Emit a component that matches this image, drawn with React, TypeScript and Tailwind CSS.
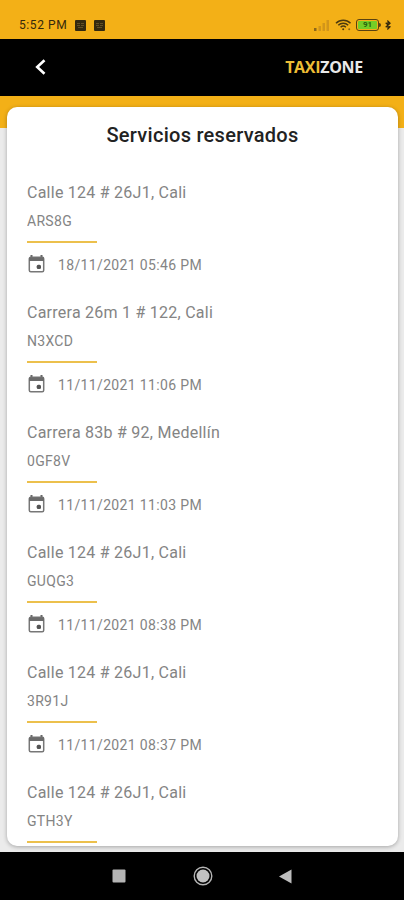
type Service = {
  address: string;
  code: string;
  date?: string;
};

const services: Service[] = [
  { address: "Calle 124 # 26J1, Cali", code: "ARS8G", date: "18/11/2021 05:46 PM" },
  { address: "Carrera 26m 1 # 122, Cali", code: "N3XCD", date: "11/11/2021 11:06 PM" },
  { address: "Carrera 83b # 92, Medellín", code: "0GF8V", date: "11/11/2021 11:03 PM" },
  { address: "Calle 124 # 26J1, Cali", code: "GUQG3", date: "11/11/2021 08:38 PM" },
  { address: "Calle 124 # 26J1, Cali", code: "3R91J", date: "11/11/2021 08:37 PM" },
  { address: "Calle 124 # 26J1, Cali", code: "GTH3Y" },
];

function NotificationIcon() {
  return (
    <svg width="11" height="11" viewBox="0 0 11 11">
      <rect width="11" height="11" rx="1" fill="#33290f" />
      <path d="M2 3.5h3M6 3.5h3M2 5.5h3M6 5.5h3M3 7.5h5" stroke="#6e5a2c" strokeWidth="0.8" />
    </svg>
  );
}

function CalendarIcon() {
  return (
    <svg width="17" height="18" viewBox="0 0 17 18">
      <path d="M3.5 0v3M13.5 0v3" stroke="#666" strokeWidth="2" />
      <rect x="1.3" y="2.3" width="14.4" height="14.4" rx="1.5" fill="none" stroke="#777" strokeWidth="1.5" />
      <path d="M1 2.5h15v3.500H1z" fill="#6b6b6b" />
      <rect x="8.7" y="9.7" width="4.3" height="4.3" rx="1.5" fill="#555" />
    </svg>
  );
}

function StatusBar() {
  return (
    <div className="flex h-[39px] shrink-0 items-center bg-[#f3b017] pt-[11px] pr-[13px] pl-[19px] text-[#35290c]">
      <span className="w-[56px] text-[12px] tracking-[0.6px] whitespace-nowrap">5:52 PM</span>
      <div className="flex gap-2">
        <NotificationIcon />
        <NotificationIcon />
      </div>
      <div className="ml-auto flex items-center">
        <svg width="16" height="11" viewBox="0 0 16 11" fill="#d2951a">
          <rect y="8" width="2.5" height="3" fill="#8d6719" />
          <rect x="4.5" y="6" width="2.5" height="5" />
          <rect x="8.5" y="3" width="2.5" height="8" />
          <rect x="12.5" width="2.5" height="11" />
        </svg>
        <svg className="ml-[5px]" width="17" height="12" viewBox="0 0 17 12" fill="none" stroke="#4b390f" strokeWidth="1.5">
          <path d="M1 4.2C5 .2 11.5 .2 15.5 4.2" />
          <path d="M3.3 6.3C6 3.6 10.5 3.6 13.2 6.3" />
          <path d="M5.6 8.3C7.2 6.8 9.3 6.8 10.9 8.3" />
          <circle cx="8.2" cy="10.3" r="1" fill="#4b390f" stroke="none" />
          <circle cx="14.2" cy="10.2" r="1" fill="#8d6719" stroke="none" />
        </svg>
        <div className="ml-[4px] flex h-[12px] w-[23px] items-center rounded-[3px] border border-[#5a4210] p-px">
          <div className="flex h-full w-full items-center justify-center rounded-[1px] bg-[#75cd27] text-[8px] leading-none font-bold text-[#27630d]">
            91
          </div>
        </div>
        <div className="h-1 w-[2px] rounded-r bg-[#5a4210]" />
        <svg className="ml-[4px]" width="6" height="10" viewBox="0 0 6 10" fill="none" stroke="#35290c" strokeWidth="1.3">
          <path d="M.7 2.8 5 6.700 3 8.800V1.200L5 3.200.7 7.200" />
        </svg>
      </div>
    </div>
  );
}

function Header() {
  return (
    <header className="flex h-[57px] shrink-0 items-center justify-between bg-black pr-[41px] pb-px pl-[34px]">
      <svg width="12" height="16" viewBox="0 0 12 16" fill="none" stroke="#fff" strokeWidth="2.6">
        <path d="M10.5 1.2 3.2 8l7.3 6.8" />
      </svg>
      <div className="font-['Open_Sans',sans-serif] text-[16px] font-bold tracking-[-0.3px] text-[#e9e9e9]">
        <span className="text-[#edbd35]">TAXI</span>ZONE
      </div>
    </header>
  );
}

function ServiceItem({ service }: { service: Service }) {
  return (
    <li className="h-[120.1px] shrink-0 text-[#848484]">
      <p className="text-[16px] leading-5 tracking-[0.25px]">{service.address}</p>
      <p className="mt-[9.5px] text-[14px] leading-[18px] tracking-[0.3px]">{service.code}</p>
      <div className="mt-[10.5px] h-[2px] w-[70px] bg-[#ecc04c]" />
      {service.date && (
        <div className="mt-[11px] flex h-5 items-center pl-px">
          <CalendarIcon />
          <span className="ml-[13px] pt-[3px] text-[14px] tracking-[0.35px]">{service.date}</span>
        </div>
      )}
    </li>
  );
}

function NavBar() {
  return (
    <nav className="flex h-12 shrink-0 items-center bg-black pl-[112px]">
      <svg width="14" height="14" viewBox="0 0 14 14">
        <rect x="0.5" y="0.5" width="13" height="13" rx="1" fill="#b5b5b5" />
      </svg>
      <svg className="ml-[67px]" width="20" height="20" viewBox="0 0 20 20">
        <circle cx="10" cy="10" r="8.8" fill="none" stroke="#b5b5b5" strokeWidth="1.4" />
        <circle cx="10" cy="10" r="6.5" fill="#c1c1c1" />
      </svg>
      <svg className="ml-[66px]" width="13" height="15" viewBox="0 0 13 15">
        <path d="M12.5.5v14L0 7.5Z" fill="#bdbdbd" />
      </svg>
    </nav>
  );
}

export default function App() {
  return (
    <div className="flex h-[900px] w-[404px] flex-col overflow-hidden bg-[#ebebeb] font-[Roboto,sans-serif]">
      <StatusBar />
      <Header />
      <main className="flex min-h-0 flex-1 flex-col bg-[linear-gradient(#f3b017_32px,#ebebeb_32px)] pt-[11px] pr-[6px] pb-[6px] pl-[7px]">
        <section className="flex min-h-0 flex-1 flex-col overflow-hidden rounded-[10px] bg-white px-5 shadow-[0_1px_4px_rgba(0,0,0,0.3)]">
          <h1 className="mt-4 text-center text-[20px] leading-6 font-medium tracking-[0.28px] text-[#222]">
            Servicios reservados
          </h1>
          <ul className="mt-[35.5px] flex min-h-0 flex-1 flex-col overflow-hidden">
            {services.map((service) => (
              <ServiceItem key={service.code} service={service} />
            ))}
          </ul>
        </section>
      </main>
      <NavBar />
    </div>
  );
}
